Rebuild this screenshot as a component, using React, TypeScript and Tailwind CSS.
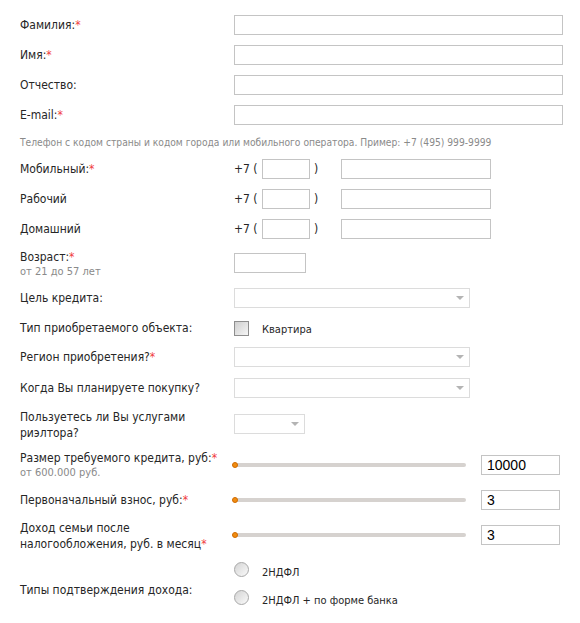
import React from 'react';

const Req = () => <span className="text-[#f03c3c]">*</span>;

const TextInput = ({ w = 'w-[329px]', value }: { w?: string; value?: string }) => (
    <div className={`${w} h-[20px] border border-[#c4c4c4] bg-white flex items-center px-[5px] text-[14px] text-black font-['Liberation_Sans',sans-serif]`}>
        {value}
    </div>
);

const Select = ({ w = 'w-[236px]' }: { w?: string }) => (
    <div className={`${w} h-[20px] border border-[#dcdcdc] bg-white flex items-center justify-end pr-[5px]`}>
        <span className="w-0 h-0 border-l-[4px] border-r-[4px] border-t-[4px] border-l-transparent border-r-transparent border-t-[#b4b4b4]" />
    </div>
);

const Slider = () => (
    <div className="relative w-[232px] h-[20px] flex items-center">
        <div className="w-full h-[4px] rounded-full bg-[#d6d2cf]" />
        <div className="absolute left-[-2px] top-[7px] w-[6px] h-[6px] rounded-full bg-[#f08c10] border border-[#d06a00]" />
    </div>
);

const Radio = () => (
    <div className="w-[15px] h-[15px] rounded-full border border-[#a8a8a8] bg-gradient-to-br from-[#d4d4d4] to-[#fafafa] shrink-0" />
);

const Row = ({ label, children, className = '' }: { label: React.ReactNode; children: React.ReactNode; className?: string }) => (
    <div className={`flex items-center h-[20px] ${className}`}>
        <div className="w-[214px] shrink-0 whitespace-nowrap">{label}</div>
        {children}
    </div>
);

const Phone = ({ label, className = '' }: { label: React.ReactNode; className?: string }) => (
    <Row label={label} className={className}>
        <span className="w-[28px]">+7 (</span>
        <TextInput w="w-[48px]" />
        <span className="w-[31px] pl-[4px]">)</span>
        <TextInput w="w-[150px]" />
    </Row>
);

export default function App() {
    return (
        <div className="w-[580px] min-h-[623px] bg-white pl-[20px] pt-[15px] text-[12px] leading-[16px] text-[#262626] font-['DejaVu_Sans_Condensed','DejaVu_Sans',sans-serif]">
            <Row label={<>Фамилия:<Req /></>}><TextInput /></Row>
            <Row label={<>Имя:<Req /></>} className="mt-[10px]"><TextInput /></Row>
            <Row label="Отчество:" className="mt-[10px]"><TextInput /></Row>
            <Row label={<>E-mail:<Req /></>} className="mt-[10px]"><TextInput /></Row>

            <p className="mt-[10px] text-[10.2px] leading-[16px] text-[#8a8a8a] whitespace-nowrap">
                Телефон с кодом страны и кодом города или мобильного оператора. Пример: +7 (495) 999-9999
            </p>

            <Phone label={<>Мобильный:<Req /></>} className="mt-[8px]" />
            <Phone label="Рабочий" className="mt-[10px]" />
            <Phone label="Домашний" className="mt-[10px]" />

            <div className="flex items-start mt-[10px]">
                <div className="w-[214px] shrink-0">
                    <div>Возраст:<Req /></div>
                    <div className="text-[11px] leading-[14px] text-[#8a8a8a]">от 21 до 57 лет</div>
                </div>
                <div className="mt-[4px]"><TextInput w="w-[72px]" /></div>
            </div>

            <Row label="Цель кредита:" className="mt-[9px]"><Select /></Row>

            <Row label="Тип приобретаемого объекта:" className="mt-[10px]">
                <div className="w-[15px] h-[15px] border border-[#8e8e8e] bg-gradient-to-br from-[#cfcfcf] to-[#f6f6f6] shrink-0" />
                <span className="ml-[13px] mt-[4px] text-[11px]">Квартира</span>
            </Row>

            <Row label={<>Регион приобретения?<Req /></>} className="mt-[9px]"><Select /></Row>
            <Row label="Когда Вы планируете покупку?" className="mt-[11px]"><Select /></Row>

            <div className="flex items-start mt-[11px]">
                <div className="w-[214px] shrink-0">
                    <div>Пользуетесь ли Вы услугами</div>
                    <div>риэлтора?</div>
                </div>
                <div className="mt-[5px]"><Select w="w-[71px]" /></div>
            </div>

            <div className="flex items-start mt-[9px]">
                <div className="w-[214px] shrink-0 whitespace-nowrap">
                    <div>Размер требуемого кредита, руб:<Req /></div>
                    <div className="text-[11px] leading-[14px] text-[#8a8a8a]">от 600.000 руб.</div>
                </div>
                <div className="mt-[5px] flex items-center">
                    <Slider />
                    <div className="ml-[15px]"><TextInput w="w-[79px]" value="10000" /></div>
                </div>
            </div>

            <Row label={<>Первоначальный взнос, руб:<Req /></>} className="mt-[10px]">
                <Slider />
                <div className="ml-[15px]"><TextInput w="w-[79px]" value="3" /></div>
            </Row>

            <div className="flex items-start mt-[10px]">
                <div className="w-[214px] shrink-0 whitespace-nowrap">
                    <div>Доход семьи после</div>
                    <div>налогообложения, руб. в месяц<Req /></div>
                </div>
                <div className="mt-[5px] flex items-center">
                    <Slider />
                    <div className="ml-[15px]"><TextInput w="w-[79px]" value="3" /></div>
                </div>
            </div>

            <div className="flex items-start mt-[10px]">
                <div className="w-[214px] shrink-0 mt-[20px]">Типы подтверждения дохода:</div>
                <div className="flex flex-col gap-[13px] text-[11px]">
                    <div className="flex items-start h-[15px]">
                        <Radio />
                        <span className="ml-[13px] mt-[3px]">2НДФЛ</span>
                    </div>
                    <div className="flex items-start h-[15px]">
                        <Radio />
                        <span className="ml-[13px] mt-[3px]">2НДФЛ + по форме банка</span>
                    </div>
                </div>
            </div>
        </div>
    );
}
